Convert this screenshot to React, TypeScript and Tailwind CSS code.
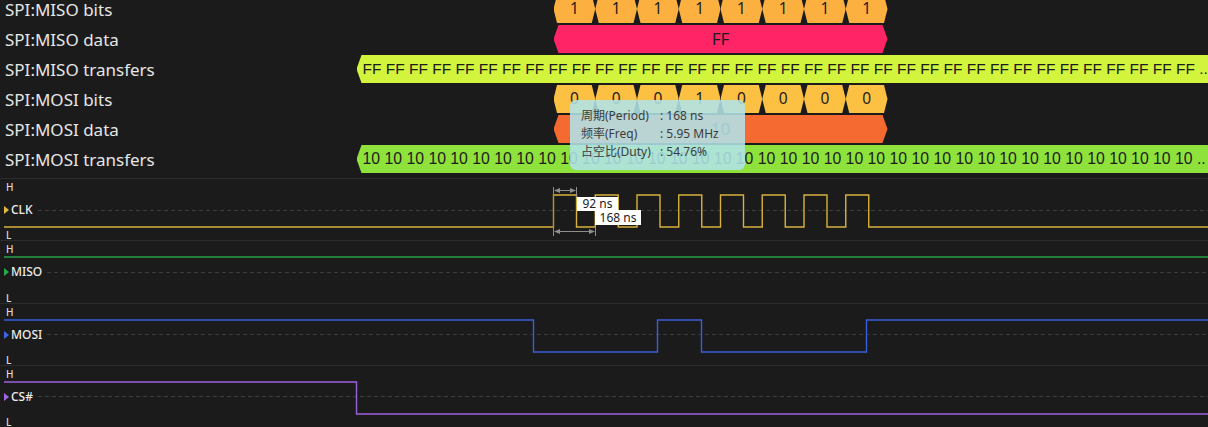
import React from "react";

// timing of the capture, in screen pixels
const T0 = 553.5;
const STEP = 41.75; // one clock period, 168 ns
const HIGH = 23; // high part of a period, 92 ns

type Seg = { x: number; w: number; text: string; fill: string; size: string; left?: boolean; small?: boolean };

const hexClip =
  "[clip-path:polygon(0_50%,5px_0,calc(100%_-_5px)_0,100%_50%,calc(100%_-_5px)_100%,5px_100%)]";
const bitClip =
  "[clip-path:polygon(0_50%,3.5px_0,calc(100%_-_3.5px)_0,100%_50%,calc(100%_-_3.5px)_100%,3.5px_100%)]";

const bits = (vals: string, fill: string): Seg[] =>
  vals.split("").map((v, i) => ({ x: T0 + i * STEP, w: STEP, text: v, fill, size: "text-[15.5px]", small: true }));

const rows: { label: string; segs: Seg[] }[] = [
  { label: "SPI:MISO bits", segs: bits("11111111", "bg-[#fbb040]") },
  {
    label: "SPI:MISO data",
    segs: [{ x: T0, w: STEP * 8, text: "FF", fill: "bg-[#ff2466]", size: "text-[17px]" }],
  },
  {
    label: "SPI:MISO transfers",
    segs: [
      {
        x: 356.5,
        w: 900,
        text: Array(36).fill("FF").join(" ") + " ..",
        fill: "bg-[#d3f43c]",
        size: "text-[15.5px]",
        left: true,
      },
    ],
  },
  { label: "SPI:MOSI bits", segs: bits("00010000", "bg-[#fcc043]") },
  {
    label: "SPI:MOSI data",
    segs: [{ x: T0, w: STEP * 8, text: "10", fill: "bg-[#f56a30]", size: "text-[17px]" }],
  },
  {
    label: "SPI:MOSI transfers",
    segs: [
      {
        x: 356.5,
        w: 900,
        text: Array(38).fill("10").join(" ") + " ..",
        fill: "bg-[#8fe23b]",
        size: "text-[15.8px]",
        left: true,
      },
    ],
  },
];

const clkPath = (() => {
  let d = "M4 48";
  for (let k = 0; k < 8; k++) {
    const r = T0 + k * STEP;
    d += ` H${r} V16 H${r + HIGH} V48`;
  }
  return d + " H1208";
})();

const channels = [
  { name: "CLK", stroke: "#d8b23c", tri: "border-l-[#e0b83a]", d: clkPath },
  { name: "MISO", stroke: "#2a9f48", tri: "border-l-[#2aa94a]", d: "M4 16 H1208" },
  {
    name: "MOSI",
    stroke: "#3a5fdc",
    tri: "border-l-[#3f66e6]",
    d: "M4 16 H533.5 V48 H657.5 V16 H701.5 V48 H866.5 V16 H1208",
  },
  { name: "CS#", stroke: "#9c62dc", tri: "border-l-[#a066e2]", d: "M4 16 H356.5 V48 H1208" },
];

function Measure() {
  const c = "#8e8e8e";
  return (
    <g stroke={c} strokeWidth={1}>
      <line x1={553.5} y1={8} x2={553.5} y2={57} />
      <line x1={576.5} y1={8} x2={576.5} y2={18} />
      <line x1={595.5} y1={48} x2={595.5} y2={57} />
      <line x1={556} y1={11.5} x2={574} y2={11.5} />
      <line x1={556} y1={52.5} x2={593} y2={52.5} />
      <polygon points="554,11.5 560,9 560,14" fill={c} stroke="none" />
      <polygon points="576,11.5 570,9 570,14" fill={c} stroke="none" />
      <polygon points="554,52.5 560,50 560,55" fill={c} stroke="none" />
      <polygon points="595,52.5 589,50 589,55" fill={c} stroke="none" />
    </g>
  );
}

export default function App() {
  return (
    <div className="relative w-[1208px] h-[427px] overflow-hidden bg-[#1b1b1b] font-['Noto_Sans','Noto_Sans_CJK_SC',sans-serif]">
      {/* decoded rows */}
      <div className="-mt-[5px] flex flex-col">
        {rows.map((row) => (
          <div key={row.label} className="relative h-[30px]">
            <div className="flex h-full items-center pl-[5px] text-[17px] text-[#e6e6e6]">{row.label}</div>
            {row.segs.map((s, i) => (
              <div
                key={i}
                className={`absolute top-0 flex h-[28px] items-center overflow-hidden whitespace-nowrap text-[#1c1c1c] ${
                  s.small ? bitClip : hexClip
                } ${s.fill} ${s.size} ${
                  s.left ? "justify-start pl-[6px] font-['Liberation_Sans',sans-serif]" : "justify-center"
                }`}
                style={{ left: s.x, width: s.w }}
              >
                {s.text}
              </div>
            ))}
          </div>
        ))}
      </div>

      {/* logic channels */}
      <div className="mt-[3px] flex h-[249px] flex-col">
        {channels.map((ch) => (
          <div key={ch.name} className="relative flex flex-1 flex-col border-t border-[#2c2c2c]">
            <svg className="absolute left-0 top-0" width={1208} height={62} fill="none">
              <path d={ch.d} stroke={ch.stroke} strokeWidth={1.4} />
              {ch.name === "CLK" && <Measure />}
            </svg>
            <div className="mt-[2px] h-[12px] pl-[6px] text-[10px] font-medium leading-[12px] text-[#dcdcdc]">H</div>
            <div className="flex h-[34px] items-center gap-[2px] pl-[4px]">
              <span className={`h-0 w-0 border-y-[4px] border-l-[5px] border-y-transparent ${ch.tri}`} />
              <span className="text-[12px] font-medium text-[#ececec]">{ch.name}</span>
              <div className="ml-[3px] h-px flex-1 bg-[repeating-linear-gradient(90deg,#3c3c3c_0_4px,transparent_4px_7px)]" />
            </div>
            <div className="mt-auto h-[10px] pl-[6px] text-[10px] font-medium leading-[10px] text-[#dcdcdc]">L</div>

            {ch.name === "CLK" && (
              <>
                <div className="absolute left-[577px] top-[18px] flex h-[14px] w-[41px] items-center justify-center bg-white text-[12px] text-[#222]">
                  92 ns
                </div>
                <div className="absolute left-[595px] top-[31px] flex h-[15px] w-[46px] items-center justify-center bg-white text-[12px] text-[#222]">
                  168 ns
                </div>
              </>
            )}
          </div>
        ))}
      </div>

      {/* measurement tooltip */}
      <div className="absolute left-[570px] top-[100px] h-[70px] w-[175px] rounded-[6px] bg-[rgba(176,226,232,0.88)] px-[11px] py-[7px] text-[12px] leading-[18px] text-[#3c3c3c]">
        <div className="grid grid-cols-[79px_1fr]">
          <span>周期(Period)</span>
          <span>: 168 ns</span>
          <span>频率(Freq)</span>
          <span>: 5.95 MHz</span>
          <span>占空比(Duty)</span>
          <span>: 54.76%</span>
        </div>
      </div>
    </div>
  );
}
